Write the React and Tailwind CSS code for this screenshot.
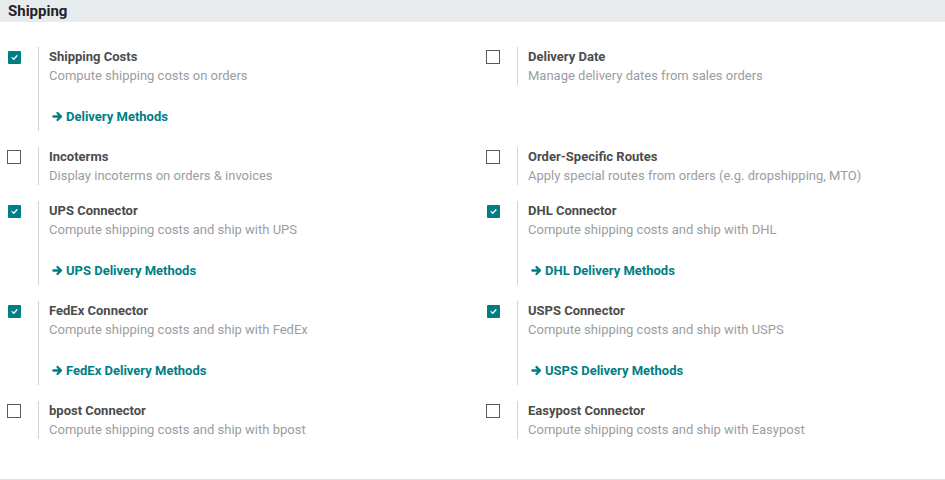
import React from 'react';

const rows = [
  [
    { title: 'Shipping Costs', desc: 'Compute shipping costs on orders', checked: true, link: 'Delivery Methods' },
    { title: 'Delivery Date', desc: 'Manage delivery dates from sales orders', checked: false },
  ],
  [
    { title: 'Incoterms', desc: 'Display incoterms on orders & invoices', checked: false },
    { title: 'Order-Specific Routes', desc: 'Apply special routes from orders (e.g. dropshipping, MTO)', checked: false },
  ],
  [
    { title: 'UPS Connector', desc: 'Compute shipping costs and ship with UPS', checked: true, link: 'UPS Delivery Methods' },
    { title: 'DHL Connector', desc: 'Compute shipping costs and ship with DHL', checked: true, link: 'DHL Delivery Methods' },
  ],
  [
    { title: 'FedEx Connector', desc: 'Compute shipping costs and ship with FedEx', checked: true, link: 'FedEx Delivery Methods' },
    { title: 'USPS Connector', desc: 'Compute shipping costs and ship with USPS', checked: true, link: 'USPS Delivery Methods' },
  ],
  [
    { title: 'bpost Connector', desc: 'Compute shipping costs and ship with bpost', checked: false },
    { title: 'Easypost Connector', desc: 'Compute shipping costs and ship with Easypost', checked: false },
  ],
];

const Checkbox = ({ checked }) =>
  checked ? (
    <div className="ml-px mt-px flex h-[13px] w-[13px] items-center justify-center rounded-[1px] bg-[#017e84]">
      <svg viewBox="0 0 10 10" className="h-[7px] w-[7px]">
        <path d="M1.5 5.2 L4 7.5 L8.5 2.5" fill="none" stroke="white" strokeWidth="1.8" strokeLinecap="round" strokeLinejoin="round" />
      </svg>
    </div>
  ) : (
    <div className="h-[14px] w-[14px] border border-[#5a5a5a] bg-white" />
  );

// chunky right arrow, like the solid icon-font glyph
const Arrow = () => (
  <svg viewBox="0 0 10 10" className="h-[11px] w-[11px]">
    <path d="M1.2 5 H8 M5 1.8 L8.2 5 L5 8.2" fill="none" stroke="#017e84" strokeWidth="2.1" strokeLinecap="round" strokeLinejoin="round" />
  </svg>
);

const Setting = ({ item }) => (
  <div className="flex items-start">
    <div className="w-[38px] shrink-0 pl-[7px] pt-[3px]">
      <Checkbox checked={item.checked} />
    </div>
    <div className="border-l border-[#d0d4d9] pl-[10px]">
      <div className="text-[13px] font-bold leading-[19px] text-[#4c4c4c]">{item.title}</div>
      <div className="text-[13px] leading-[19px] text-[#9a9da2]">{item.desc}</div>
      {item.link && (
        <div className="mt-[16px] flex items-center gap-[3px] pb-[5px] pl-[3px] pt-[6px] text-[13px] font-bold leading-[19px] text-[#017e84]">
          <Arrow />
          <span>{item.link}</span>
        </div>
      )}
    </div>
  </div>
);

export default function App() {
  return (
    <div className="w-[945px] bg-white font-['Roboto',sans-serif]">
      <div className="flex h-[22px] items-center bg-[#e9ecef] pl-[8px] text-[15px] font-bold text-[#212529]">
        Shipping
      </div>
      <div className="flex flex-col gap-[16px] border-b border-[#dee2e6] pb-[40px] pt-[25px]">
        {rows.map((row, i) => (
          <div key={i} className="grid grid-cols-[479px_1fr] items-start">
            <Setting item={row[0]} />
            <Setting item={row[1]} />
          </div>
        ))}
      </div>
    </div>
  );
}
